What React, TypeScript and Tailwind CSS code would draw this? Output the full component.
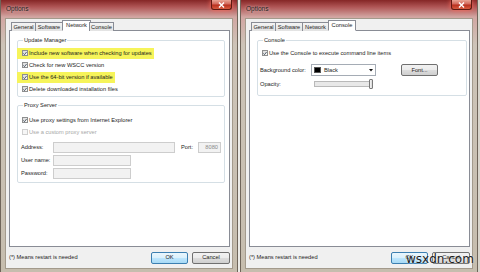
import React from "react";

const FONT = "font-['Liberation_Sans',Arial,sans-serif]";

function Check({ checked = true, disabled = false }: { checked?: boolean; disabled?: boolean }) {
  return (
    <span
      className={
        disabled
          ? "inline-flex w-[6px] h-[6px] border border-[#cfcfcf] bg-[#f6f6f6] items-center justify-center shrink-0"
          : "inline-flex w-[6px] h-[6px] border border-[#8e8f8f] bg-[linear-gradient(135deg,#d8d8d8,#fbfbfb)] items-center justify-center shrink-0"
      }
    >
      {checked && (
        <svg width="5" height="5" viewBox="0 0 5 5">
          <path d="M0.5 2.4 L1.9 3.9 L4.5 0.6" stroke="#2c3a4a" strokeWidth="1" fill="none" />
        </svg>
      )}
    </span>
  );
}

type Tab = { label: string; w: string; ws: string };
const TABS: Tab[] = [
  { label: "General", w: "w-[25px]", ws: "w-[27px]" },
  { label: "Software", w: "w-[28px]", ws: "w-[30px]" },
  { label: "Network", w: "w-[27px]", ws: "w-[29px]" },
  { label: "Console", w: "w-[25px]", ws: "w-[28px]" },
];

function Tabs({ sel }: { sel: string }) {
  return (
    <div className="flex items-end h-[11px] pl-[2px] relative z-10 -mb-px">
      {TABS.map((t) =>
        t.label === sel ? (
          <div
            key={t.label}
            className={`${t.ws} -mx-[1px] h-[11px] bg-white border border-[#898c95] border-b-white flex items-center justify-center text-[5.7px] text-[#1c1c1c]`}
          >
            {t.label}
          </div>
        ) : (
          <div
            key={t.label}
            className={`${t.w} h-[9px] bg-[linear-gradient(180deg,#f4f4f4,#e2e2e2)] border border-[#898c95] border-b-0 -ml-px first:ml-0 flex items-center justify-center text-[5.7px] text-[#1c1c1c]`}
          >
            {t.label}
          </div>
        )
      )}
    </div>
  );
}

function CloseBtn() {
  return (
    <div className="w-[21px] h-[10px] rounded-b-[3px] border border-t-0 border-[#5e1a12] bg-[linear-gradient(180deg,#e9a595_0%,#d2685a_45%,#b8301f_55%,#d65a3e_100%)] shadow-[0_0_5px_#ff6a5a] flex items-center justify-center">
      <svg width="7" height="6" viewBox="0 0 7 6">
        <path d="M1 0.5 L6 5.5 M6 0.5 L1 5.5" stroke="#fff" strokeWidth="1.4" />
      </svg>
    </div>
  );
}

function Button({ label, def = false, w }: { label: string; def?: boolean; w: string }) {
  return (
    <div
      className={
        def
          ? `${w} h-[12px] rounded-[2px] border border-[#3c7fb1] bg-[linear-gradient(180deg,#eaf6fd,#d9f0fc_50%,#bee6fd_51%,#a7d9f5)] flex items-center justify-center text-[5.7px] text-[#1c1c1c]`
          : `${w} h-[12px] rounded-[2px] border border-[#707070] bg-[linear-gradient(180deg,#f2f2f2,#ebebeb_50%,#dddddd_51%,#cfcfcf)] flex items-center justify-center text-[5.7px] text-[#1c1c1c]`
      }
    >
      {label}
    </div>
  );
}

function Window({ sel, children }: { sel: string; children: React.ReactNode }) {
  return (
    <div className="w-[238px] h-[272px] flex flex-col px-[5px] pb-[4px] border-x border-[#6f655a] bg-[linear-gradient(180deg,#852626_0px,#b05656_7px,#d2a6a2_17px,#cdc4b8_45px,#c6bdae_100%)] shrink-0">
      <div className="h-[19px] flex justify-between items-start">
        <div className="pt-[4px] text-[6.5px] text-[#1e1e1e] [text-shadow:0_0_3px_#f4dede]">Options</div>
        <CloseBtn />
      </div>
      <div className="flex-1 flex flex-col bg-[#f0f0f0] pl-[3px] pr-[2px] pt-[1px] shadow-[0_0_0_1px_#a39a8c]">
        <Tabs sel={sel} />
        <div className="h-[217px] border border-[#898c95] bg-white pl-[7px] pr-[6px] pt-[6px]">{children}</div>
        <div className="h-[21px] flex items-center justify-between">
          <span className="text-[5.7px] text-[#1c1c1c]">(*) Means restart is needed</span>
          <div className="flex gap-[4px]">
            <Button label="OK" def w="w-[37px]" />
            <Button label="Cancel" w="w-[38px]" />
          </div>
        </div>
      </div>
    </div>
  );
}

function Group({ title, children, className = "" }: { title: string; children: React.ReactNode; className?: string }) {
  return (
    <fieldset className={`border border-[#d5dfe5] rounded-[2px] ${className}`}>
      <legend className="ml-[1px] px-[1px] text-[5.7px] leading-[7px] text-[#1c1c1c]">{title}</legend>
      {children}
    </fieldset>
  );
}

function Row({ label, hl = false, disabled = false }: { label: string; hl?: boolean; disabled?: boolean }) {
  return (
    <div className="h-[12px] flex items-center">
      <div
        className={
          hl
            ? "-ml-[5px] pl-[5px] pr-[2px] h-[11px] bg-[#f6f45a] flex items-center gap-[1px]"
            : "h-[11px] flex items-center gap-[1px]"
        }
      >
        <Check checked={!disabled} disabled={disabled} />
        <span className={disabled ? "text-[5.7px] text-[#a6a6a6]" : "text-[5.7px] text-[#1c1c1c]"}>{label}</span>
      </div>
    </div>
  );
}

function Input({ w, value = "" }: { w: string; value?: string }) {
  return (
    <div className={`${w} h-[11px] border border-[#cdcdcd] bg-[#f2f2f2] flex items-center justify-end pr-[2px] text-[5.7px] text-[#8a8a8a]`}>
      {value}
    </div>
  );
}

function NetworkPanel() {
  return (
    <div className="w-[208px]">
      <Group title="Update Manager" className="pl-[4px] pt-[3px] pb-[1px]">
        <Row label="Include new software when checking for updates" hl />
        <Row label="Check for new WSCC version" />
        <Row label="Use the 64-bit version if available" hl />
        <Row label="Delete downloaded installation files" />
      </Group>
      <Group title="Proxy Server" className="mt-[5px] pl-[4px] pt-[5px] pb-[3px]">
        <Row label="Use proxy settings from Internet Explorer" />
        <Row label="Use a custom proxy server" disabled />
        <div className="-ml-[1px] mt-[4px] flex flex-col gap-[2px] text-[5.7px] text-[#1c1c1c]">
          <div className="flex items-center">
            <span className="w-[32px]">Address:</span>
            <Input w="w-[122px]" />
            <span className="ml-[6px] w-[17px]">Port:</span>
            <Input w="w-[23px]" value="8080" />
          </div>
          <div className="flex items-center">
            <span className="w-[32px]">User name:</span>
            <Input w="w-[78px]" />
          </div>
          <div className="flex items-center">
            <span className="w-[32px]">Password:</span>
            <Input w="w-[78px]" />
          </div>
        </div>
      </Group>
    </div>
  );
}

function ConsolePanel() {
  return (
    <div className="w-[210px]">
      <Group title="Console" className="pl-[4px] pt-[3px] pb-[6px]">
        <Row label="Use the Console to execute command line items" />
        <div className="-ml-[2px] mt-[5px] flex items-center text-[5.7px] text-[#1c1c1c]">
          <span className="w-[51px]">Background color:</span>
          <div className="w-[65px] h-[12px] border border-[#a5acb5] bg-white flex items-center pl-[2px] pr-[2px]">
            <span className="w-[7px] h-[6px] bg-black border border-[#555]" />
            <span className="ml-[3px] flex-1">Black</span>
            <svg width="4" height="3" viewBox="0 0 4 3">
              <path d="M0 0 L4 0 L2 2.5 Z" fill="#111" />
            </svg>
          </div>
          <div className="ml-[25px]">
            <Button label="Font..." w="w-[37px]" />
          </div>
        </div>
        <div className="-ml-[2px] mt-[3px] flex items-center text-[5.7px] text-[#1c1c1c] h-[10px]">
          <span className="w-[54px]">Opacity:</span>
          <div className="relative w-[59px] h-[6px] border border-[#b9b9b9] bg-[#e8e8e8]">
            <div className="absolute right-[-1px] top-[-3px] w-[4px] h-[10px] border border-[#7a7a7a] bg-[linear-gradient(90deg,#f6f6f6,#d8d8d8)] rounded-[1px]" />
          </div>
        </div>
      </Group>
    </div>
  );
}

export default function App() {
  return (
    <div className={`${FONT} relative w-[480px] h-[272px] overflow-hidden flex bg-[#d9d5cc]`}>
      <Window sel="Network">
        <NetworkPanel />
      </Window>
      <div className="w-[2px] h-full bg-[#ecebe7]" />
      <Window sel="Console">
        <ConsolePanel />
      </Window>
      <div className="absolute left-[406px] top-[252px] text-[12px] leading-[14px] text-[#1a1a1a] font-['DejaVu_Sans',sans-serif] [text-shadow:0_0_2px_#fff]">
        wsxdn.com
      </div>
    </div>
  );
}
